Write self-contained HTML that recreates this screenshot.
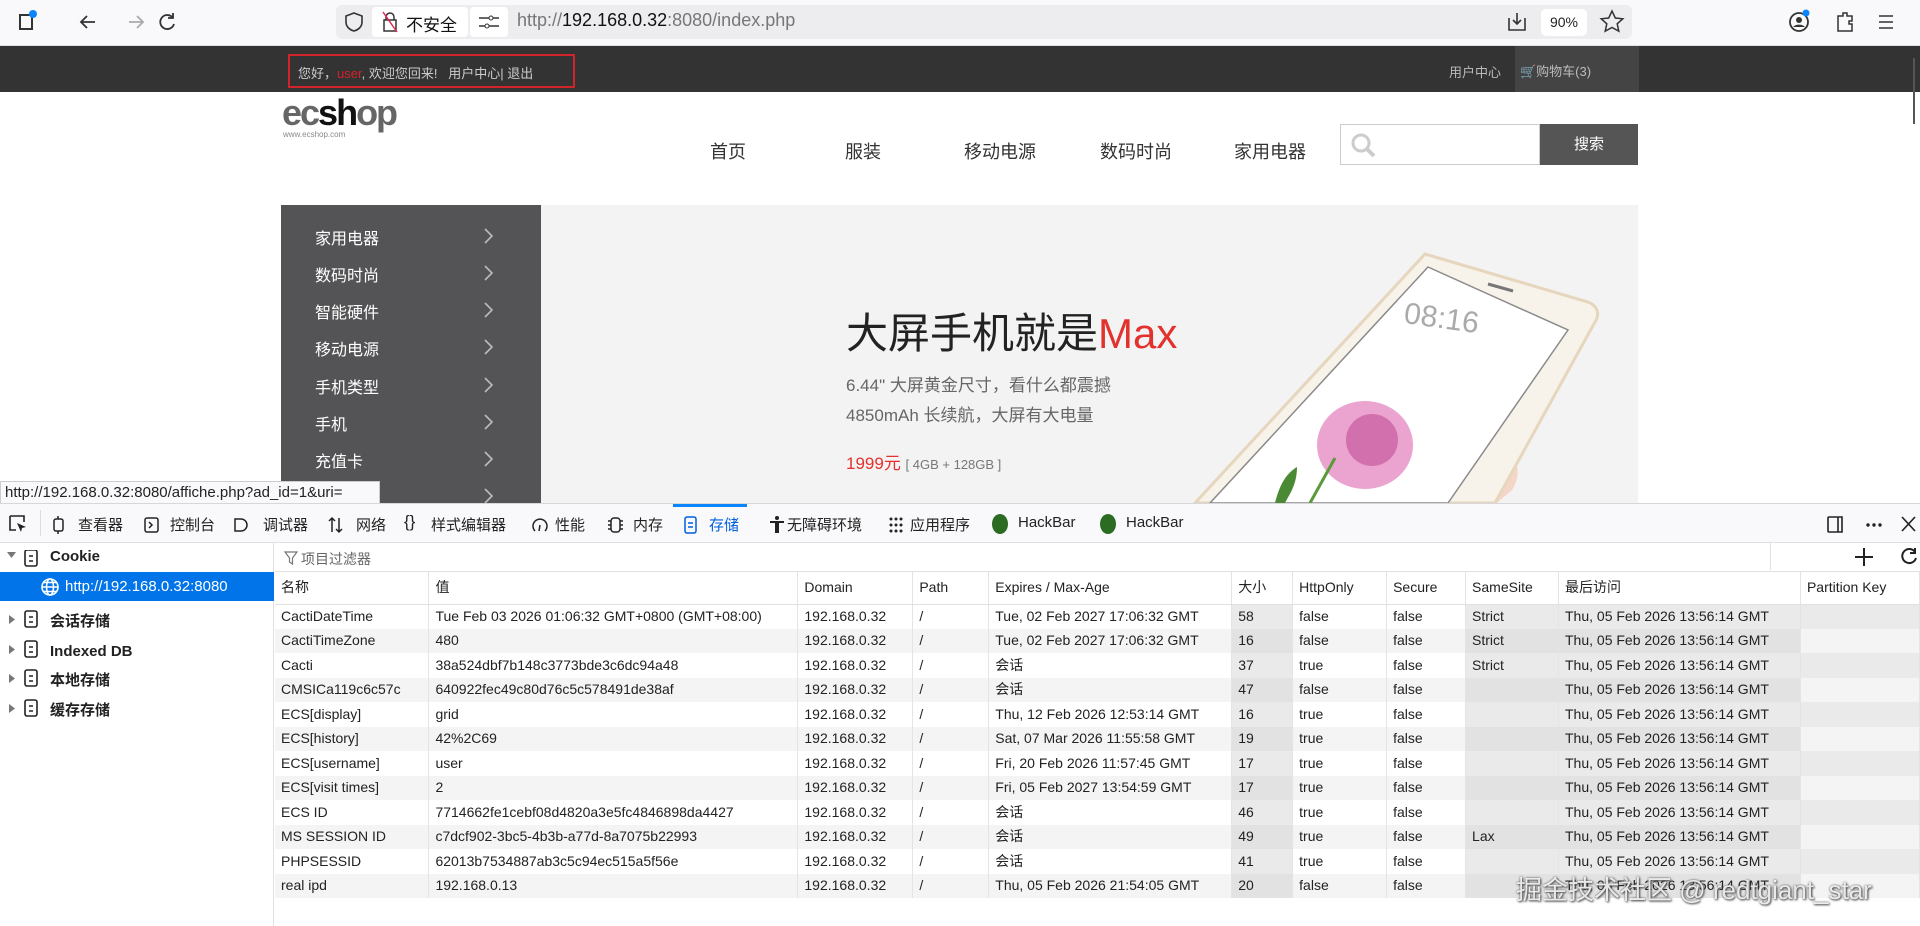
<!DOCTYPE html>
<html><head><meta charset="utf-8">
<style>
*{box-sizing:border-box;margin:0;padding:0}
body{width:1920px;height:926px;overflow:hidden;background:#fff;font-family:"Liberation Sans","Noto Sans CJK SC",sans-serif;position:relative;color:#222}
.a{position:absolute;white-space:nowrap}
.tb{left:0;top:0;width:1920px;height:46px;background:#f9f9fb;border-bottom:1px solid #e0e0e6}
.url{left:336px;top:5px;width:1296px;height:34px;background:#ededf0;border-radius:6px}
.dark{left:0;top:46px;width:1920px;height:46px;background:#333}
.nav{top:138px;font-size:18px;color:#333}
.menu{left:281px;top:205px;width:260px;height:298px;background:#545456}
.mi{left:315px;font-size:16px;color:#fff}
.ar{left:483px}
.dt{left:0;top:503px;width:1920px;height:423px;background:#fff;border-top:1px solid #d7d7db}
.dtb{left:0;top:504px;width:1920px;height:39px;background:#f9f9fb;border-bottom:1px solid #e0e0e2}
.tab{top:514px;font-size:15px;color:#222}
.side{left:0;top:543px;width:274px;height:383px;border-right:1px solid #e0e0e2}
.sr{left:50px;font-size:15px;font-weight:bold;color:#222}
table{position:absolute;left:275px;top:572px;border-collapse:collapse;font-size:14px;table-layout:fixed}
td{height:24.5px;line-height:23px;padding:0 6px;white-space:nowrap;overflow:hidden;border-right:1px solid #e4e4e4;color:#222}
tr.h td{height:32px;border-bottom:1px solid #e0e0e2;background:#fff}
tr:nth-child(2n+1):not(.h) td{background:#f4f4f4}
td.s{background:#eaeaea!important}
tr:nth-child(2n+1):not(.h) td.s{background:#e2e2e2!important}
</style></head><body>
<div class="a tb"></div>
<svg class="a" style="left:18px;top:10px" width="160" height="26" viewBox="0 0 160 26">
<rect x="2" y="5" width="12" height="14" fill="none" stroke="#333" stroke-width="2"/><circle cx="15" cy="4" r="4" fill="#0a84ff"/>
<path d="M77 12H63M69 6l-6 6 6 6" fill="none" stroke="#333" stroke-width="1.8"/>
<path d="M111 12h14M119 6l6 6-6 6" fill="none" stroke="#aaa" stroke-width="1.8"/>
<path d="M155 8a7 7 0 1 0 1 6M155 3v5h-5" fill="none" stroke="#333" stroke-width="1.8"/>
</svg>
<div class="a url"></div>
<svg class="a" style="left:343px;top:11px" width="22" height="22"><path d="M11 2l8 3v6c0 5-4 8-8 9-4-1-8-4-8-9V5z" fill="none" stroke="#333" stroke-width="1.6"/></svg>
<div class="a" style="left:372px;top:7px;width:96px;height:30px;background:#fff;border-radius:4px"></div>
<svg class="a" style="left:382px;top:11px" width="16" height="22"><rect x="2" y="9" width="12" height="11" fill="none" stroke="#333" stroke-width="1.5"/><path d="M4 9V6a4 4 0 0 1 8 0v3" fill="none" stroke="#333" stroke-width="1.5"/><path d="M1 1l14 20" stroke="#e22850" stroke-width="1.5"/></svg>
<div class="a" style="left:406px;top:11px;font-size:17px;color:#111">不安全</div>
<div class="a" style="left:470px;top:7px;width:38px;height:30px;background:#fff;border-radius:4px"></div>
<svg class="a" style="left:478px;top:14px" width="22" height="16"><path d="M1 4h10M15 4h6M1 12h6M11 12h10" stroke="#333" stroke-width="1.5"/><circle cx="13" cy="4" r="2" fill="none" stroke="#333"/><circle cx="9" cy="12" r="2" fill="none" stroke="#333"/></svg>
<div class="a" style="left:517px;top:10px;font-size:18px;color:#777">http://<span style="color:#111">192.168.0.32</span>:8080/index.php</div>
<svg class="a" style="left:1505px;top:10px" width="24" height="24"><path d="M4 8v12h16V8M12 3v11M8 10l4 4 4-4" fill="none" stroke="#333" stroke-width="1.6"/></svg>
<div class="a" style="left:1541px;top:9px;width:46px;height:27px;background:#fff;border-radius:5px;font-size:14px;text-align:center;line-height:27px">90%</div>
<svg class="a" style="left:1599px;top:9px" width="26" height="26"><path d="M13 2l3.3 7 7.5.8-5.6 5 1.6 7.4L13 18.5 6.2 22.2l1.6-7.4-5.6-5 7.5-.8z" fill="none" stroke="#333" stroke-width="1.5"/></svg>
<svg class="a" style="left:1786px;top:8px" width="120" height="28"><circle cx="13" cy="14" r="9" fill="none" stroke="#333" stroke-width="1.8"/><circle cx="13" cy="12" r="3" fill="#333"/><path d="M7 19a7 5 0 0 1 12 0" fill="#333"/><circle cx="20" cy="5" r="3.5" fill="#0a84ff"/>
<path d="M52 8h5v-3h4v3h5v5h-3v3h3v7H52z" fill="none" stroke="#333" stroke-width="1.5"/>
<path d="M93 8h14M93 14h14M93 20h14" stroke="#333" stroke-width="1.6"/></svg>
<div class="a dark"></div>
<div class="a" style="left:288px;top:54px;width:287px;height:34px;border:2px solid #d1232a"></div>
<div class="a" style="left:298px;top:63px;font-size:13px;color:#ccc">您好，<span style="color:#d1232a">user</span>, 欢迎您回来!&nbsp;&nbsp; 用户中心| 退出</div>
<div class="a" style="left:1449px;top:62px;font-size:13px;color:#bbb">用户中心</div>
<div class="a" style="left:1515px;top:46px;width:124px;height:46px;background:#444"></div>
<div class="a" style="left:1520px;top:61px;font-size:13px;color:#bbb">🛒购物车(3)</div>
<div class="a" style="left:1913px;top:58px;width:2px;height:66px;background:#555"></div>
<div class="a" style="left:282px;top:92px;font-size:36px;font-weight:bold;color:#666;letter-spacing:-2px">ec<span style="color:#111">sh</span>op</div>
<div class="a" style="left:283px;top:130px;font-size:8px;color:#888">www.ecshop.com</div>
<div class="a nav" style="left:710px">首页</div>
<div class="a nav" style="left:845px">服装</div>
<div class="a nav" style="left:964px">移动电源</div>
<div class="a nav" style="left:1100px">数码时尚</div>
<div class="a nav" style="left:1234px">家用电器</div>
<div class="a" style="left:1340px;top:124px;width:200px;height:41px;border:1px solid #ccc"></div>
<svg class="a" style="left:1350px;top:132px" width="28" height="26"><circle cx="11" cy="11" r="8" fill="none" stroke="#ccc" stroke-width="3"/><path d="M17 17l7 7" stroke="#ccc" stroke-width="4"/></svg>
<div class="a" style="left:1540px;top:124px;width:98px;height:41px;background:#555;color:#fff;font-size:15px;text-align:center;line-height:41px">搜索</div>
<div class="a" style="left:541px;top:205px;width:1097px;height:298px;background:#f3f3f3"></div>
<div class="a menu"></div>
<div class="a mi" style="top:225px">家用电器</div>
<div class="a mi" style="top:262px">数码时尚</div>
<div class="a mi" style="top:299px">智能硬件</div>
<div class="a mi" style="top:336px">移动电源</div>
<div class="a mi" style="top:374px">手机类型</div>
<div class="a mi" style="top:411px">手机</div>
<div class="a mi" style="top:448px">充值卡</div>
<svg class="a ar" style="top:226px" width="12" height="290"><g fill="none" stroke="#bbb" stroke-width="1.6">
<path d="M2 3l7 7-7 7"/><path d="M2 40l7 7-7 7"/><path d="M2 77l7 7-7 7"/><path d="M2 114l7 7-7 7"/><path d="M2 152l7 7-7 7"/><path d="M2 189l7 7-7 7"/><path d="M2 226l7 7-7 7"/><path d="M2 263l7 7-7 7"/></g></svg>
<div class="a" style="left:846px;top:300px;font-size:42px;color:#222">大屏手机就是<span style="color:#e3322d">Max</span></div>
<div class="a" style="left:846px;top:371px;font-size:17px;color:#666">6.44" 大屏黄金尺寸，看什么都震撼</div>
<div class="a" style="left:846px;top:401px;font-size:17px;color:#666">4850mAh 长续航，大屏有大电量</div>
<div class="a" style="left:846px;top:449px;font-size:17px;color:#e3322d">1999元 <span style="font-size:13px;color:#777">[ 4GB + 128GB ]</span></div>
<svg class="a" style="left:1180px;top:240px" width="460" height="263" viewBox="1180 240 460 263">
<path d="M1290 415c-25 10-50 50-75 88h90z" fill="#f6e0d6"/>
<path d="M1490 445c25 0 35 25 22 45l-15 13h-70z" fill="#f3d6c8"/>
<path d="M1425 254l163 48c10 4 12 12 7 20l-100 181h-300z" fill="#f7f2ea" stroke="#e6d6bd" stroke-width="3"/>
<path d="M1428 267l140 63-120 173h-238z" fill="#fff" stroke="#8a8a8a" stroke-width="1.5"/>
<path d="M1488 284l25 7" stroke="#777" stroke-width="3"/>
<text x="1405" y="325" font-size="30" fill="#aaa" font-family="Liberation Sans" transform="rotate(8 1420 310)">08:16</text>
<ellipse cx="1365" cy="445" rx="48" ry="44" fill="#eaa4cf"/><circle cx="1372" cy="440" r="26" fill="#d170ad"/>
<path d="M1275 503c5-20 12-30 22-36 0 18-8 28-12 36z" fill="#4b8a34"/><path d="M1310 503l25-45" stroke="#5a9a3a" stroke-width="3"/>
</svg>
<div class="a" style="left:0;top:481px;width:380px;height:23px;background:#f9f9fb;border:1px solid #ccc;font-size:15px;line-height:21px;padding-left:4px;color:#222">http://192.168.0.32:8080/affiche.php?ad_id=1&amp;uri=</div>
<div class="a dt"></div>
<div class="a dtb"></div>
<svg class="a" style="left:8px;top:514px" width="20" height="20"><path d="M2 2h14v6M2 2v14h6" fill="none" stroke="#222" stroke-width="1.6"/><path d="M9 9l9 4-4 1-1 4z" fill="#222"/></svg>
<div class="a" style="left:40px;top:510px;width:1px;height:26px;background:#ddd"></div>
<svg class="a" style="left:52px;top:515px" width="880" height="20"><g fill="none" stroke="#222" stroke-width="1.5">
<rect x="2" y="4" width="9" height="12" rx="2"/><path d="M6 1v3M6 16v3"/>
<rect x="93" y="3" width="13" height="14" rx="2"/><path d="M97 7l3 3-3 3"/>
<path d="M183 4h6a6 6 0 0 1 0 12h-6z"/>
<path d="M280 3v14M277 6l3-3 3 3M287 17V3M284 14l3 3 3-3"/>
<path d="M483 16a7 7 0 1 1 10 0M488 10l-1 6"/>
<rect x="559" y="3" width="9" height="14" rx="3"/><path d="M556 6h3M556 10h3M556 14h3M568 6h3M568 10h3M568 14h3"/>
</g>
<g fill="none" stroke="#0060df" stroke-width="1.5"><rect x="633" y="2" width="11" height="16" rx="2"/><path d="M636 8h5M636 12h5"/></g>
<g fill="#222"><circle cx="725" cy="3" r="2"/><path d="M718 6h14v2h-5v10h-4V8h-5z"/>
<g transform="translate(837,0)"><circle cx="2" cy="4" r="1.5"/><circle cx="7" cy="4" r="1.5"/><circle cx="12" cy="4" r="1.5"/><circle cx="2" cy="10" r="1.5"/><circle cx="7" cy="10" r="1.5"/><circle cx="12" cy="10" r="1.5"/><circle cx="2" cy="16" r="1.5"/><circle cx="7" cy="16" r="1.5"/><circle cx="12" cy="16" r="1.5"/></g></g>
</svg>
<div class="a tab" style="left:78px">查看器</div>
<div class="a tab" style="left:170px">控制台</div>
<div class="a tab" style="left:263px">调试器</div>
<div class="a tab" style="left:356px">网络</div>
<div class="a" style="left:404px;top:512px;font-size:17px">{}</div>
<div class="a tab" style="left:431px">样式编辑器</div>
<div class="a tab" style="left:555px">性能</div>
<div class="a tab" style="left:633px">内存</div>
<div class="a" style="left:673px;top:504px;width:74px;height:3px;background:#0a84ff"></div>
<div class="a tab" style="left:709px;color:#0060df">存储</div>
<div class="a tab" style="left:787px">无障碍环境</div>
<div class="a tab" style="left:910px">应用程序</div>
<div class="a" style="left:992px;top:514px;width:16px;height:20px;border-radius:50%;background:#2b6b22"></div>
<div class="a tab" style="left:1018px">HackBar</div>
<div class="a" style="left:1100px;top:514px;width:16px;height:20px;border-radius:50%;background:#2b6b22"></div>
<div class="a tab" style="left:1126px">HackBar</div>
<svg class="a" style="left:1826px;top:514px" width="90" height="20"><g fill="none" stroke="#222" stroke-width="1.6"><rect x="2" y="3" width="10" height="15" rx="1"/><path d="M12 3h4v15h-4"/><path d="M76 3l13 14M89 3L76 17"/></g><g fill="#222"><circle cx="42" cy="11" r="1.7"/><circle cx="48" cy="11" r="1.7"/><circle cx="54" cy="11" r="1.7"/></g></svg>
<div class="a side"></div>
<svg class="a" style="left:6px;top:550px" width="40" height="170"><g fill="#777"><path d="M1 2h9l-4.5 6z"/><path d="M3 65v9l6-4.5z"/><path d="M3 95v9l6-4.5z"/><path d="M3 124v9l6-4.5z"/><path d="M3 154v9l6-4.5z"/></g>
<g fill="none" stroke="#222" stroke-width="1.6"><rect x="19" y="0" width="12" height="16" rx="2"/><path d="M23 6h4M23 11h4"/><rect x="19" y="61" width="12" height="16" rx="2"/><path d="M23 67h4M23 72h4"/><rect x="19" y="91" width="12" height="16" rx="2"/><path d="M23 97h4M23 102h4"/><rect x="19" y="120" width="12" height="16" rx="2"/><path d="M23 126h4M23 131h4"/><rect x="19" y="150" width="12" height="16" rx="2"/><path d="M23 156h4M23 161h4"/></g></svg>
<div class="a sr" style="top:548px">Cookie</div>
<div class="a" style="left:0;top:572px;width:274px;height:29px;background:#0074e8"></div>
<svg class="a" style="left:40px;top:577px" width="20" height="20"><g fill="none" stroke="#fff" stroke-width="1.6"><circle cx="10" cy="10" r="8"/><ellipse cx="10" cy="10" rx="3.5" ry="8"/><path d="M2 10h16M4 5.5h12M4 14.5h12"/></g></svg>
<div class="a" style="left:65px;top:578px;font-size:15px;color:#fff">http://192.168.0.32:8080</div>
<div class="a sr" style="top:607px;line-height:29.5px">会话存储<br>Indexed DB<br>本地存储<br>缓存存储</div>
<div class="a" style="left:275px;top:543px;width:1645px;height:29px;border-bottom:1px solid #e0e0e2"></div>
<svg class="a" style="left:284px;top:551px" width="14" height="14"><path d="M1 1h12l-4.5 6v6l-3-2V7z" fill="none" stroke="#777" stroke-width="1.2"/></svg>
<div class="a" style="left:301px;top:549px;font-size:14px;color:#666">项目过滤器</div>
<div class="a" style="left:1770px;top:542px;width:1px;height:28px;background:#e0e0e2"></div>
<svg class="a" style="left:1854px;top:546px" width="66" height="22"><g fill="none" stroke="#222" stroke-width="2"><path d="M10 2v18M1 11h18"/><path d="M61 6a7 7 0 1 0 1 6M61 2v5h-5"/></g></svg>
<table>
<colgroup><col style="width:154px"><col style="width:369px"><col style="width:115px"><col style="width:76px"><col style="width:243px"><col style="width:61px"><col style="width:94px"><col style="width:79px"><col style="width:93px"><col style="width:242px"><col style="width:119px"></colgroup>
<tr class="h"><td>名称</td><td>值</td><td>Domain</td><td>Path</td><td>Expires / Max-Age</td><td>大小</td><td>HttpOnly</td><td>Secure</td><td>SameSite</td><td>最后访问</td><td>Partition Key</td></tr>
<tr><td>CactiDateTime</td><td>Tue Feb 03 2026 01:06:32 GMT+0800 (GMT+08:00)</td><td>192.168.0.32</td><td>/</td><td>Tue, 02 Feb 2027 17:06:32 GMT</td><td class="s">58</td><td>false</td><td>false</td><td class="s">Strict</td><td class="s">Thu, 05 Feb 2026 13:56:14 GMT</td><td class="s"></td></tr>
<tr><td>CactiTimeZone</td><td>480</td><td>192.168.0.32</td><td>/</td><td>Tue, 02 Feb 2027 17:06:32 GMT</td><td class="s">16</td><td>false</td><td>false</td><td class="s">Strict</td><td class="s">Thu, 05 Feb 2026 13:56:14 GMT</td><td></td></tr>
<tr><td>Cacti</td><td>38a524dbf7b148c3773bde3c6dc94a48</td><td>192.168.0.32</td><td>/</td><td>会话</td><td class="s">37</td><td>true</td><td>false</td><td class="s">Strict</td><td class="s">Thu, 05 Feb 2026 13:56:14 GMT</td><td class="s"></td></tr>
<tr><td>CMSICa119c6c57c</td><td>640922fec49c80d76c5c578491de38af</td><td>192.168.0.32</td><td>/</td><td>会话</td><td class="s">47</td><td>false</td><td>false</td><td class="s"></td><td class="s">Thu, 05 Feb 2026 13:56:14 GMT</td><td></td></tr>
<tr><td>ECS[display]</td><td>grid</td><td>192.168.0.32</td><td>/</td><td>Thu, 12 Feb 2026 12:53:14 GMT</td><td class="s">16</td><td>true</td><td>false</td><td class="s"></td><td class="s">Thu, 05 Feb 2026 13:56:14 GMT</td><td class="s"></td></tr>
<tr><td>ECS[history]</td><td>42%2C69</td><td>192.168.0.32</td><td>/</td><td>Sat, 07 Mar 2026 11:55:58 GMT</td><td class="s">19</td><td>true</td><td>false</td><td class="s"></td><td class="s">Thu, 05 Feb 2026 13:56:14 GMT</td><td></td></tr>
<tr><td>ECS[username]</td><td>user</td><td>192.168.0.32</td><td>/</td><td>Fri, 20 Feb 2026 11:57:45 GMT</td><td class="s">17</td><td>true</td><td>false</td><td class="s"></td><td class="s">Thu, 05 Feb 2026 13:56:14 GMT</td><td class="s"></td></tr>
<tr><td>ECS[visit times]</td><td>2</td><td>192.168.0.32</td><td>/</td><td>Fri, 05 Feb 2027 13:54:59 GMT</td><td class="s">17</td><td>true</td><td>false</td><td class="s"></td><td class="s">Thu, 05 Feb 2026 13:56:14 GMT</td><td></td></tr>
<tr><td>ECS ID</td><td>7714662fe1cebf08d4820a3e5fc4846898da4427</td><td>192.168.0.32</td><td>/</td><td>会话</td><td class="s">46</td><td>true</td><td>false</td><td class="s"></td><td class="s">Thu, 05 Feb 2026 13:56:14 GMT</td><td class="s"></td></tr>
<tr><td>MS SESSION ID</td><td>c7dcf902-3bc5-4b3b-a77d-8a7075b22993</td><td>192.168.0.32</td><td>/</td><td>会话</td><td class="s">49</td><td>true</td><td>false</td><td class="s">Lax</td><td class="s">Thu, 05 Feb 2026 13:56:14 GMT</td><td></td></tr>
<tr><td>PHPSESSID</td><td>62013b7534887ab3c5c94ec515a5f56e</td><td>192.168.0.32</td><td>/</td><td>会话</td><td class="s">41</td><td>true</td><td>false</td><td class="s"></td><td class="s">Thu, 05 Feb 2026 13:56:14 GMT</td><td class="s"></td></tr>
<tr><td>real ipd</td><td>192.168.0.13</td><td>192.168.0.32</td><td>/</td><td>Thu, 05 Feb 2026 21:54:05 GMT</td><td class="s">20</td><td>false</td><td>false</td><td class="s"></td><td class="s">Thu, 05 Feb 2026 13:56:14 GMT</td><td></td></tr>
</table>
<div class="a" style="left:1516px;top:870px;font-size:26px;color:rgba(255,255,255,.85);text-shadow:0 0 2px #555,1px 1px 2px #444">掘金技术社区 @ redtgiant_star</div>
</body></html>
